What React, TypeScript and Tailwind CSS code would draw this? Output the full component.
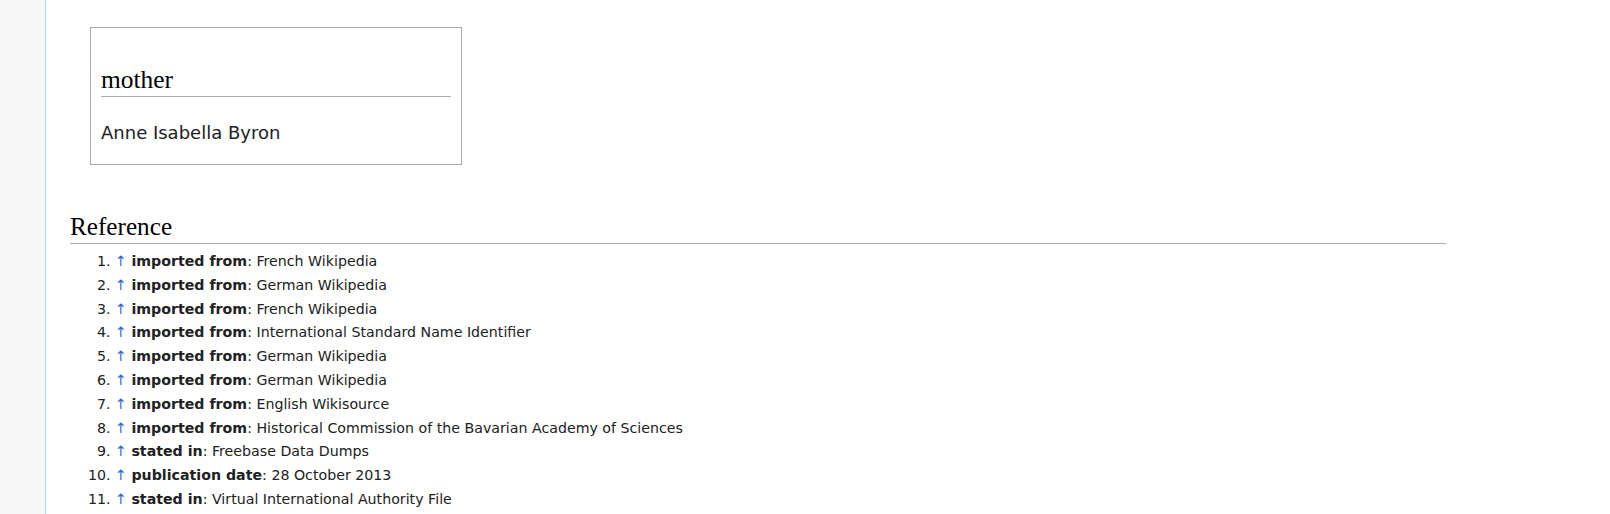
const refs: [string, string][] = [
  ["imported from", "French Wikipedia"],
  ["imported from", "German Wikipedia"],
  ["imported from", "French Wikipedia"],
  ["imported from", "International Standard Name Identifier"],
  ["imported from", "German Wikipedia"],
  ["imported from", "German Wikipedia"],
  ["imported from", "English Wikisource"],
  ["imported from", "Historical Commission of the Bavarian Academy of Sciences"],
  ["stated in", "Freebase Data Dumps"],
  ["publication date", "28 October 2013"],
  ["stated in", "Virtual International Authority File"],
];

const App = () => {
  return (
    <div className="flex min-h-[514px] w-full bg-white font-['DejaVu_Sans',sans-serif] text-[#202122]">
      <div className="w-[45px] shrink-0 bg-[#f6f6f6]" />
      <div className="flex-1 border-l border-[#a7d7f9] pl-[24px] pt-[27px]">
        <div className="w-[1376px]">
          <div className="ml-[20px] w-[372px] border border-[#aaaaaa] px-[10px] pt-[35px] pb-[17px]">
            <h2 className="border-b border-[#aaaaaa] font-['Liberation_Serif',serif] text-[25.4px] leading-[33px] text-black">
              mother
            </h2>
            <div className="mt-[21px] text-[18px] leading-[29px]">Anne Isabella Byron</div>
          </div>
          <h2 className="mt-[45px] border-b border-[#aaaaaa] font-['Liberation_Serif',serif] text-[25.2px] leading-[33px] text-black">
            Reference
          </h2>
          <ol className="mt-[6px] ml-[45px] list-decimal text-[14.2px]">
            {refs.map(([prop, value], idx) => (
              <li key={idx} className="mb-[1.4px] leading-[22.4px]">
                <span className="text-[#3366cc]">↑</span> <b>{prop}</b>: {value}
              </li>
            ))}
          </ol>
        </div>
      </div>
    </div>
  );
};

export default App;
